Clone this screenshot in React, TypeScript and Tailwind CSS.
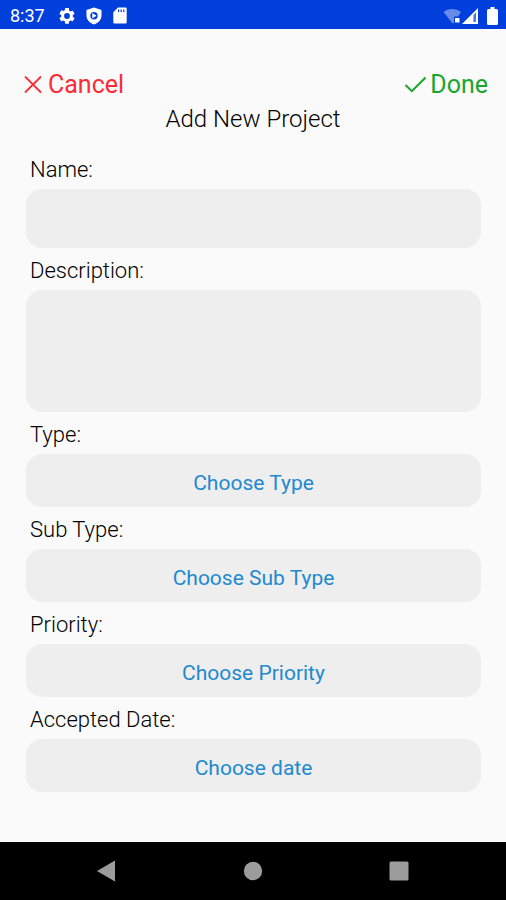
import React from 'react';

interface PickerProps {
  id: string;
  label: string;
  text: string;
}

const labelClass = 'flex h-[42px] items-center pl-1 pt-1 text-[22px] font-light leading-7 text-black';

const Picker: React.FC<PickerProps> = ({ id, label, text }) => (
  <div>
    <label htmlFor={id} className={labelClass}>{label}</label>
    <button
      id={id}
      type="button"
      className="flex h-[53px] w-full items-center justify-center rounded-2xl bg-[#eeeeee] pt-1 text-[21px] leading-7 text-[#2289cf]"
    >
      {text}
    </button>
  </div>
);

const StatusBar = () => (
  <header className="flex h-[29px] items-center justify-between bg-[#003fdc] pr-2 pl-[10px] pt-0.5 text-white">
    <div className="flex items-center gap-[10px]">
      <span className="mr-1 text-[18px] leading-6">8:37</span>
      <svg viewBox="2 2 20 20" className="h-4 w-4" fill="currentColor">
        <path d="M19.14 12.94c.04-.3.06-.61.06-.94s-.02-.64-.07-.94l2.03-1.58a.5.5 0 0 0 .12-.61l-1.92-3.32a.5.5 0 0 0-.59-.22l-2.39.96c-.5-.38-1.03-.7-1.62-.94l-.36-2.54A.48.48 0 0 0 13.92 2h-3.84c-.24 0-.43.17-.47.41l-.36 2.54c-.59.24-1.13.57-1.62.94l-2.39-.96a.48.48 0 0 0-.59.22L2.74 8.87a.48.48 0 0 0 .12.61l2.03 1.58c-.05.3-.09.63-.09.94s.02.64.07.94l-2.03 1.58a.5.5 0 0 0-.12.61l1.92 3.32c.12.22.37.29.59.22l2.39-.96c.5.38 1.03.7 1.62.94l.36 2.54c.05.24.24.41.48.41h3.84c.24 0 .44-.17.47-.41l.36-2.54c.59-.24 1.13-.56 1.62-.94l2.39.96c.22.08.47 0 .59-.22l1.92-3.32a.5.5 0 0 0-.12-.61zM12 15.6a3.6 3.6 0 1 1 0-7.2 3.6 3.6 0 0 1 0 7.2" />
      </svg>
      <svg viewBox="0 0 18 18" className="h-[18px] w-[18px]" fill="currentColor" fillRule="evenodd">
        <path d="M9 .5 16.5 3v5.5c0 4.200-3 7.500-7.500 9-4.500-1.500-7.500-4.800-7.500-9V3zM9 5a3.700 3.700 0 1 0 0 7.400A3.700 3.700 0 0 0 9 5M7.300 6v5.400l4.200-2.700z" />
      </svg>
      <svg viewBox="0 0 14 17" className="h-[17px] w-[14px]" fill="currentColor" fillRule="evenodd">
        <path d="M5 .5h7.500a1.200 1.200 0 0 1 1.200 1.200v13.600a1.200 1.200 0 0 1-1.200 1.200h-11A1.200 1.200 0 0 1 .3 15.300V5.200zM5 2.500v2.500h1.200V2.500zm2.600 0v2.500h1.200V2.500zm2.600 0v2.500h1.200V2.500z" />
      </svg>
    </div>
    <div className="flex items-center">
      <svg viewBox="0 0 19 16" className="h-4 w-[19px]">
        <path d="M.5 4C5.500 0 13 0 18 4L15 8.500H11v6L9.500 15.500z" fill="#fff" fillOpacity=".4" />
        <path d="M12 10h4.500v4.500H12z" fill="#fff" />
      </svg>
      <svg viewBox="0 0 17 16" className="h-4 w-[17px]" fillRule="evenodd">
        <path d="M16 0v16H0zM11.500 7v7H14V4.500z" fill="#fff" />
        <path d="M11.500 7v7H14V4.500z" fill="#fff" fillOpacity=".3" />
      </svg>
      <svg viewBox="0 0 11 18" className="ml-2 h-[18px] w-[11px]" fill="#fff">
        <path d="M3.500 0h4v2h2A1.500 1.500 0 0 1 11 3.500v13a1.500 1.500 0 0 1-1.500 1.500h-8A1.500 1.500 0 0 1 0 16.500v-13A1.500 1.500 0 0 1 1.500 2h2z" />
      </svg>
    </div>
  </header>
);

const NavBar = () => (
  <nav className="mt-auto flex h-[58px] items-center justify-center gap-[126px] bg-black text-[#9c9c9c]">
    <button type="button" aria-label="Back">
      <svg viewBox="0 0 20 22" className="h-[22px] w-5" fill="currentColor"><path d="M0 11 18 .5v21z" /></svg>
    </button>
    <button type="button" aria-label="Home">
      <svg viewBox="0 0 20 20" className="h-5 w-5" fill="currentColor"><circle cx="10" cy="10" r="9.200" /></svg>
    </button>
    <button type="button" aria-label="Recent apps">
      <svg viewBox="0 0 20 20" className="h-5 w-5" fill="currentColor"><rect x=".5" y=".5" width="19" height="19" rx="1.500" /></svg>
    </button>
  </nav>
);

export default function App() {
  return (
    <div className="flex min-h-screen flex-col bg-[#fafafa] font-['Roboto',sans-serif]">
      <StatusBar />
      <div className="flex items-center justify-between pt-10 pr-[18px] pl-6">
        <button type="button" className="flex items-center gap-1.5 text-[25px] leading-8 text-[#fb2c36]">
          <svg viewBox="0 0 18 18" className="h-[18px] w-[18px]" fill="none" stroke="currentColor" strokeWidth="1.800">
            <path d="M1 .5 17 16.500M17 .5 1 16.500" />
          </svg>
          Cancel
        </button>
        <button type="button" className="flex items-center gap-1 text-[25px] leading-8 text-[#18a62c]">
          <svg viewBox="0 0 22 18" className="h-[18px] w-[22px]" fill="none" stroke="currentColor" strokeWidth="2">
            <path d="M1.500 9 7.800 15.200 21.500 1.500" />
          </svg>
          Done
        </button>
      </div>
      <h1 className="text-center text-[24px] font-light leading-9 text-black">Add New Project</h1>
      <form className="pt-[10px] pr-[25px] pb-10 pl-[26px]">
        <label htmlFor="name" className={labelClass}>Name:</label>
        <input id="name" type="text" className="block h-[59px] w-full rounded-2xl bg-[#eeeeee] px-4 text-[22px] outline-none" />
        <label htmlFor="description" className={labelClass}>Description:</label>
        <textarea id="description" className="block h-[122px] w-full resize-none rounded-2xl bg-[#eeeeee] px-4 py-3 text-[22px] outline-none" />
        <Picker id="type" label="Type:" text="Choose Type" />
        <Picker id="sub-type" label="Sub Type:" text="Choose Sub Type" />
        <Picker id="priority" label="Priority:" text="Choose Priority" />
        <Picker id="date" label="Accepted Date:" text="Choose date" />
      </form>
      <NavBar />
    </div>
  );
}
